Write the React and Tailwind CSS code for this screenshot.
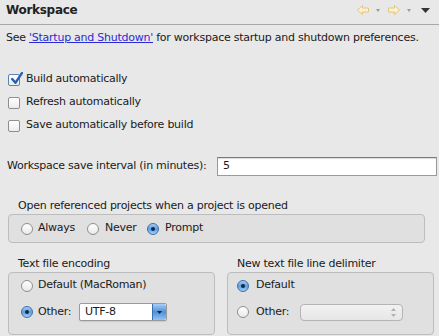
import React from "react";

function Checkbox({ checked }) {
  return (
    <span
      className={`relative inline-block w-[12px] h-[12px] rounded-[2px] border bg-gradient-to-b from-white to-[#ececec] ${
        checked ? "border-[#5b82b5]" : "border-[#8e8e8e]"
      }`}
    >
      {checked && (
        <svg viewBox="0 0 12 12" className="absolute left-[1px] -top-[3px] w-[13px] h-[13px]">
          <path d="M2 6.5 L5 10 L11 1" fill="none" stroke="#2a5fb0" strokeWidth="2.2" strokeLinecap="round" strokeLinejoin="round" />
        </svg>
      )}
    </span>
  );
}

function Radio({ checked }) {
  if (checked) {
    return (
      <span className="relative shrink-0 inline-flex items-center justify-center w-[12px] h-[12px] rounded-full border border-[#3d6fa8] bg-gradient-to-b from-[#a9cdf2] via-[#5f9de0] to-[#9fd0f7]">
        <span className="w-[4px] h-[4px] rounded-full bg-[#0f2a4a]" />
      </span>
    );
  }
  return (
    <span className="shrink-0 inline-block w-[12px] h-[12px] rounded-full border border-[#8e8e8e] bg-gradient-to-b from-white to-[#e9e9e9]" />
  );
}

function NavArrow({ dir }) {
  const d =
    dir === "left"
      ? "M0.5 5 L5.5 0.5 L5.5 3 L11.5 3 L11.5 7 L5.5 7 L5.5 9.5 Z"
      : "M11.5 5 L6.5 0.5 L6.5 3 L0.5 3 L0.5 7 L6.5 7 L6.5 9.5 Z";
  return (
    <svg width="12" height="10" viewBox="0 0 12 10">
      <path d={d} fill="#fbf1cf" stroke="#e2c680" strokeWidth="1" strokeLinejoin="round" />
    </svg>
  );
}

function SmallTri() {
  return (
    <svg width="4" height="3" viewBox="0 0 4 3">
      <path d="M0 0 L4 0 L2 3 Z" fill="#9a9a9a" />
    </svg>
  );
}

export default function App() {
  return (
    <div
      className="w-[439px] h-[336px] overflow-hidden bg-[#e8e8e8] text-[11px] tracking-[-0.25px] text-[#1a1a1a]"
      style={{ fontFamily: '"DejaVu Sans", Verdana, sans-serif' }}
    >
      {/* Header */}
      <div className="h-[25px] border-b border-[#a8a8a8]">
        <div className="h-[20px] flex items-center justify-between pl-[6px] pr-[9px]">
          <span className="font-bold text-[12px] tracking-[-0.3px] text-[#222]">Workspace</span>
          <div className="flex items-center">
            <NavArrow dir="left" />
            <span className="ml-[7px] flex"><SmallTri /></span>
            <span className="ml-[8px] flex"><NavArrow dir="right" /></span>
            <span className="ml-[7px] flex"><SmallTri /></span>
            <svg width="9" height="5" viewBox="0 0 9 5" className="ml-[10px]">
              <path d="M0 0 L9 0 L4.5 5 Z" fill="#333" />
            </svg>
          </div>
        </div>
      </div>

      {/* Description */}
      <div className="h-[26px] flex items-center px-[6px] whitespace-nowrap">
        See&nbsp;
        <span className="text-[#2a2ad6] underline">'Startup and Shutdown'</span>
        &nbsp;for workspace startup and shutdown preferences.
      </div>

      {/* Checkboxes */}
      <div className="mt-[17px] pl-[8px]">
        {[
          ["Build automatically", true],
          ["Refresh automatically", false],
          ["Save automatically before build", false],
        ].map(([label, checked]) => (
          <div key={label} className="h-[23px] flex items-center gap-[6px]">
            <Checkbox checked={checked} />
            <span>{label}</span>
          </div>
        ))}
      </div>

      {/* Save interval */}
      <div className="mt-[20px] flex items-center pl-[7px] pr-[2px]">
        <span className="w-[210px] whitespace-nowrap">Workspace save interval (in minutes):</span>
        <div className="flex-1 h-[19px] bg-white border border-[#9a9a9a] border-t-[#7a7a7a] shadow-[inset_0_1px_1px_rgba(0,0,0,0.15)] flex items-center pl-[5px]">
          5
        </div>
      </div>

      {/* Open referenced projects */}
      <div className="mt-[23px] px-[8px] w-[433px]">
        <div className="h-[15px] flex items-center pl-[10px]">
          Open referenced projects when a project is opened
        </div>
        <div className="h-[29px] rounded-[4px] border border-[#bdbdbd] bg-[#e0e0e0] flex items-center pl-[12px]">
          <label className="w-[66px] flex items-center gap-[5px]"><Radio /> Always</label>
          <label className="w-[60px] flex items-center gap-[6px]"><Radio /> Never</label>
          <label className="flex items-center gap-[6px]"><Radio checked /> Prompt</label>
        </div>
      </div>

      {/* Encoding + delimiter */}
      <div className="mt-[13px] flex gap-[12px] pl-[8px]">
        <div className="w-[207px]">
          <div className="h-[16px] flex items-center pl-[10px]">Text file encoding</div>
          <div className="h-[63px] rounded-[4px] border border-[#bdbdbd] bg-[#e0e0e0] pt-[4px] pl-[12px]">
            <div className="h-[17px] flex items-center gap-[5px]"><Radio /> Default (MacRoman)</div>
            <div className="mt-[9px] h-[18px] flex items-center">
              <Radio checked />
              <span className="ml-[5px] w-[41px]">Other:</span>
              <div className="w-[88px] h-[18px] flex bg-white border border-[#9a9a9a] rounded-[2px] shadow-[0_1px_1px_rgba(0,0,0,0.1)]">
                <span className="flex-1 pl-[5px] flex items-center">UTF-8</span>
                <span className="w-[14px] h-full rounded-r-[2px] bg-gradient-to-b from-[#a8cdf3] via-[#4f8fdc] to-[#8fc4f2] border-l border-[#3d6fa8] flex items-center justify-center">
                  <svg width="5" height="3" viewBox="0 0 5 3">
                    <path d="M0 0 L5 0 L2.5 3 Z" fill="#10233e" />
                  </svg>
                </span>
              </div>
            </div>
          </div>
        </div>
        <div className="w-[207px]">
          <div className="h-[16px] flex items-center pl-[10px]">New text file line delimiter</div>
          <div className="h-[63px] rounded-[4px] border border-[#bdbdbd] bg-[#e0e0e0] pt-[4px] pl-[9px]">
            <div className="h-[17px] flex items-center gap-[7px]"><Radio checked /> Default</div>
            <div className="mt-[9px] h-[18px] flex items-center">
              <Radio />
              <span className="ml-[7px] w-[44px]">Other:</span>
              <div className="w-[103px] h-[17px] rounded-[4px] border border-[#b4b4b4] bg-gradient-to-b from-[#f2f2f2] to-[#e6e6e6] flex justify-end items-center pr-[6px]">
                <svg width="5" height="9" viewBox="0 0 5 9">
                  <path d="M0 3 L5 3 L2.5 0 Z M0 6 L5 6 L2.5 9 Z" fill="#b0b0b0" />
                </svg>
              </div>
            </div>
          </div>
        </div>
      </div>
    </div>
  );
}
